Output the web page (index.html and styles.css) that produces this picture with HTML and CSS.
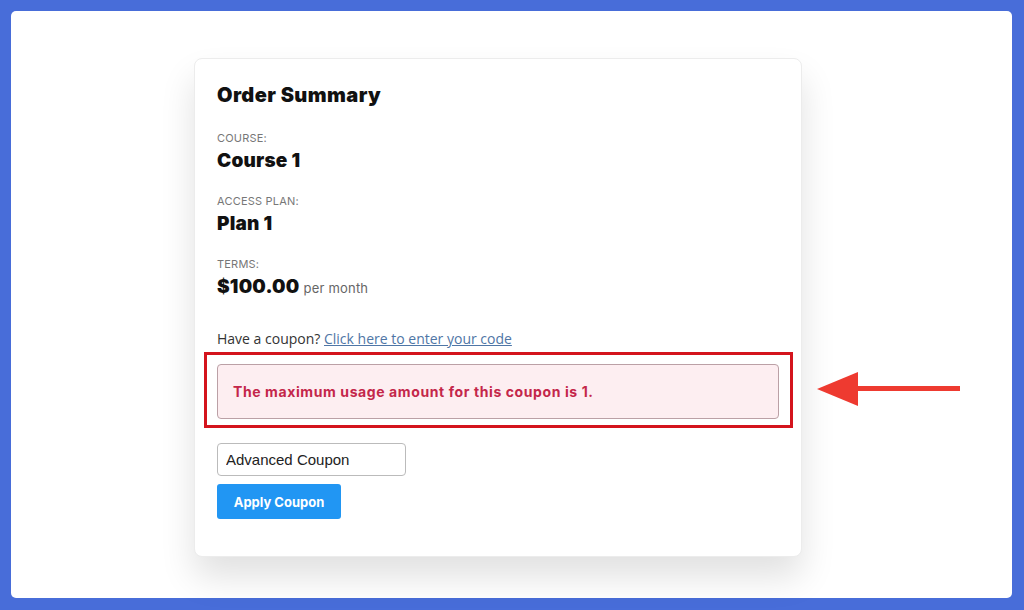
FILE: index.html
```html
<!DOCTYPE html>
<html lang="en">
<head>
  <meta charset="UTF-8" />
  <title>Order Summary</title>
  <link rel="stylesheet" href="styles.css">
</head>
<body>
  <div class="frame">
    <div class="summary-card">
      <h3 class="card-title">Order Summary</h3>

      <div class="field-label first">COURSE:</div>
      <div class="field-value">Course 1</div>

      <div class="field-label">ACCESS PLAN:</div>
      <div class="field-value">Plan 1</div>

      <div class="field-label">TERMS:</div>
      <div class="field-value">$100.00 <span class="per">per month</span></div>

      <p class="coupon-toggle">Have a coupon? <a href="#">Click here to enter your code</a></p>

      <div class="highlight-box">
        <div class="error-notice">The maximum usage amount for this coupon is 1.</div>
      </div>

      <div class="coupon-form">
        <input type="text" class="coupon-input" value="Advanced Coupon" />
        <button class="apply-btn">Apply Coupon</button>
      </div>
    </div>

    <svg class="pointer-arrow" width="150" height="40" viewBox="0 0 150 40">
      <polygon points="0,19 41,2 41,36" fill="#ee3a30"/>
      <rect x="38" y="16" width="105" height="5" fill="#ee3a30"/>
    </svg>
  </div>
</body>
</html>
```

FILE: styles.css
```css
* {
  box-sizing: border-box;
}

body {
  margin: 0;
  padding: 11px 12px 12px 11px;
  background: #486dd9;
  font-family: Inter, 'Noto Sans', sans-serif;
}

.frame {
  position: relative;
  height: 587px;
  background: #fff;
  border-radius: 5px;
  padding: 47px 0 0 183px;
}

.summary-card {
  width: 608px;
  height: 499px;
  background: #fff;
  border: 1px solid #ececec;
  border-radius: 8px;
  padding: 24px 22px 0 22px;
  box-shadow: 0 20px 35px rgba(0, 0, 0, 0.12);
}

.card-title {
  margin: 0;
  font-size: 20px;
  line-height: 24px;
  font-weight: 900;
  color: #111;
  letter-spacing: 0.4px;
}

.field-label {
  margin-top: 20px;
  font-size: 11px;
  line-height: 16px;
  color: #777;
  font-weight: 400;
  letter-spacing: 0.2px;
}

.field-label.first {
  margin-top: 23px;
}

.field-value {
  margin-top: 3px;
  font-size: 19px;
  line-height: 24px;
  font-weight: 900;
  color: #111;
  letter-spacing: 0.2px;
}

.per {
  font-size: 13px;
  font-weight: 400;
  color: #666;
  letter-spacing: 0.2px;
}

.coupon-toggle {
  margin: 29px 0 0 0;
  font-family: 'Open Sans', sans-serif;
  font-size: 14px;
  line-height: 20px;
  color: #333;
}

.coupon-toggle a {
  color: #4f76a6;
}

.highlight-box {
  margin: 3px -14px 0 -13px;
  border: 3px solid #d4141d;
  padding: 9px 11px 6px 10px;
}

.error-notice {
  height: 55px;
  background: #fdeef1;
  border: 1px solid #bba0a6;
  border-radius: 4px;
  padding: 0 15px;
  display: flex;
  align-items: center;
  font-size: 14px;
  font-weight: 700;
  color: #c4264a;
  letter-spacing: 0.6px;
}

.coupon-form {
  margin-top: 15px;
  display: flex;
  flex-direction: column;
  align-items: flex-start;
  gap: 8px;
}

.coupon-input {
  width: 189px;
  height: 33px;
  border: 1px solid #bbb;
  border-radius: 4px;
  padding: 0 8px;
  font-family: 'Liberation Sans', Arial, sans-serif;
  font-size: 15px;
  color: #222;
}

.apply-btn {
  width: 124px;
  height: 35px;
  border: none;
  border-radius: 3px;
  background: #2196f3;
  color: #fff;
  font-family: Inter, sans-serif;
  font-size: 13px;
  font-weight: 700;
  cursor: pointer;
}

.pointer-arrow {
  position: absolute;
  left: 806px;
  top: 359px;
}
```
